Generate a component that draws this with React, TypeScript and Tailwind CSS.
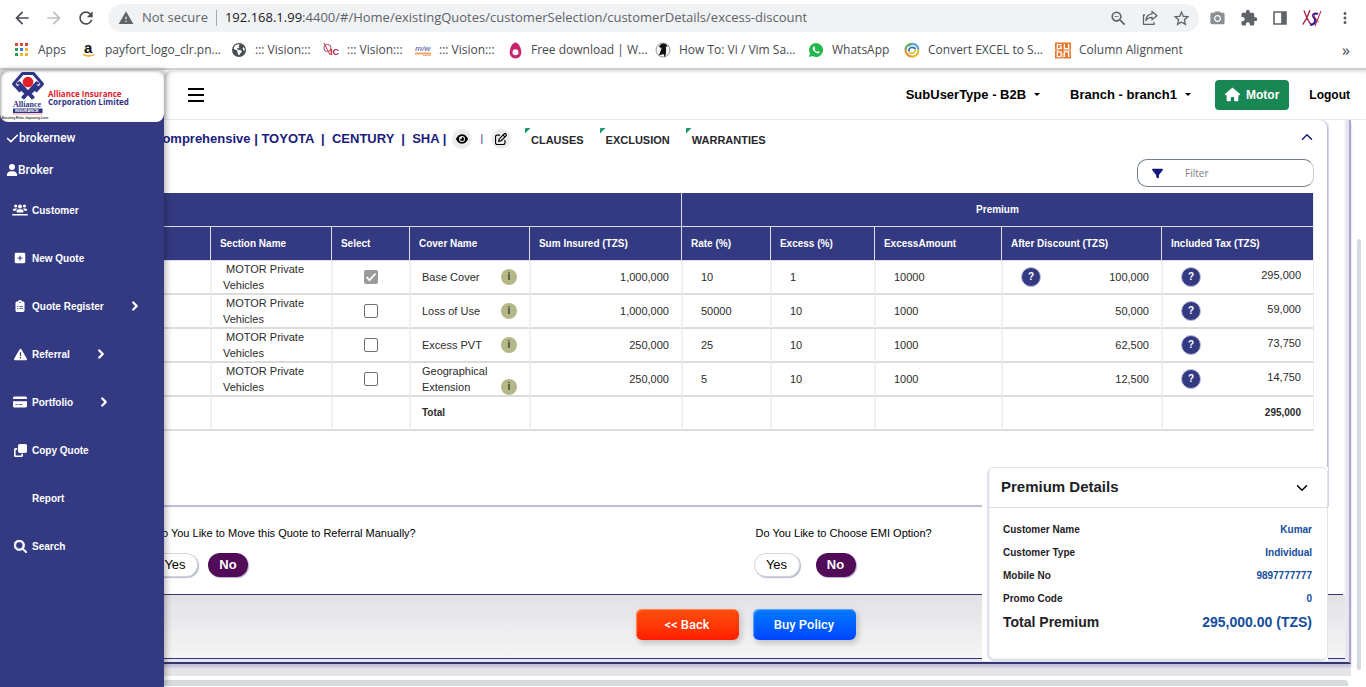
import React from 'react';
import {
  MdArrowBack,
  MdArrowForward,
  MdRefresh,
  MdWarning,
  MdOutlineZoomOut,
  MdStarBorder,
  MdPhotoCamera,
  MdExtension,
  MdMoreVert,
} from 'react-icons/md';
import {
  FaCheck,
  FaUser,
  FaUsersLine,
  FaSquarePlus,
  FaClipboardList,
  FaTriangleExclamation,
  FaCreditCard,
  FaClone,
  FaMagnifyingGlass,
  FaFilter,
  FaHouse,
  FaEye,
  FaRegPenToSquare,
  FaEarthAmericas,
} from 'react-icons/fa6';
import { ChevronDown, ChevronRight, ChevronUp } from 'lucide-react';

const UI = "font-['Liberation_Sans',Arial,sans-serif]";

function AppsIcon() {
  const colors = ['#d9483b', '#d9483b', '#d9483b', '#2a9d58', '#3b78e0', '#e8b530', '#2a9d58', '#e8b530', '#e8b530'];
  return (
    <svg width="14" height="14" viewBox="0 0 14 14">
      {colors.map((c, i) => (
        <rect key={i} x={(i % 3) * 5} y={Math.floor(i / 3) * 5} width="3" height="3" fill={c} />
      ))}
    </svg>
  );
}

function AmazonIcon() {
  return (
    <svg width="14" height="16" viewBox="0 0 14 16" className="overflow-visible">
      <text x="2" y="11" fontFamily="Liberation Sans" fontSize="15" fontWeight="700" fill="#111">a</text>
      <path d="M1 12.5 Q6.5 15.5 12.5 12.5" fill="none" stroke="#f5a623" strokeWidth="1.3" />
    </svg>
  );
}

function QicIcon() {
  return (
    <svg width="16" height="16" viewBox="0 0 16 16" className="overflow-visible">
      <circle cx="4.5" cy="6" r="3.6" fill="none" stroke="#a9475f" strokeWidth="1" />
      <path d="M1 1 L7 13" stroke="#c23a55" strokeWidth="1" />
      <text x="7" y="13" fontFamily="Liberation Sans" fontSize="9" fontWeight="700" fill="#b0203c">IC</text>
    </svg>
  );
}

function MwIcon() {
  return (
    <svg width="16" height="14" viewBox="0 0 16 14" className="overflow-visible">
      <text x="0" y="8" fontFamily="Liberation Sans" fontSize="8" fontStyle="italic" fontWeight="700" fill="#7b83b8">m/w</text>
      <path d="M0 10.5 H16" stroke="#f0a35e" strokeWidth="2" />
      <path d="M8 12.5 H16" stroke="#f4b888" strokeWidth="1" />
    </svg>
  );
}

function DropIcon() {
  return (
    <svg width="13" height="17" viewBox="0 0 13 17">
      <path d="M6.5 0.5 C9.5 0.5 12.3 6 12.3 10.3 C12.3 14 9.8 16.5 6.5 16.5 C3.2 16.5 .7 14 .7 10.3 C.7 6 3.5 .5 6.5 .5Z" fill="#c9246b" />
      <circle cx="6.5" cy="10.2" r="3" fill="#fff" />
    </svg>
  );
}

function BirdIcon() {
  return (
    <svg width="16" height="16" viewBox="0 0 16 16">
      <circle cx="8" cy="8" r="7" fill="#f4f4f4" stroke="#999" strokeWidth="1" />
      <path d="M5 3 C8 .5 12 1.500 12.500 5 L11 4.500 C10.500 7 12 9 10 15.500 L8.500 12 L4 13.500 C4.500 11 6 9 6.500 6 L4 5Z" fill="#111" />
    </svg>
  );
}

function WhatsAppIcon() {
  return (
    <svg width="16" height="16" viewBox="0 0 16 16">
      <path d="M8 1 A7 7 0 1 1 4.6 14.1 L1 15 L2 11.500 A7 7 0 0 1 8 1Z" fill="#22b84b" />
      <path d="M5.600 4.400 C4 5.400 4.600 7.600 6.400 9.600 C8.300 11.600 10.600 12.300 11.700 10.800 L11.700 10 L10 9 L9.200 9.900 C8 9.400 7 8.400 6.500 7.300 L7.200 6.400 L6.500 4.500Z" fill="#fff" />
    </svg>
  );
}

function SwirlIcon() {
  return (
    <svg width="16" height="16" viewBox="0 0 16 16" fill="none" strokeWidth="2.2" strokeLinecap="round">
      <path d="M5 3.5 C8 .5 13.500 1.800 14.300 7" stroke="#58a7dc" />
      <path d="M14.300 8.500 C14.300 12.500 10.500 15.500 6.500 14.300" stroke="#e9b52c" />
      <path d="M6 14.300 C3 13 1.500 10.500 1.600 8" stroke="#e8903a" />
      <path d="M1.600 7 C2 4.500 4 2.500 7 2" stroke="#5fae5b" />
      <path d="M4.800 8.500 C5 5.500 8.500 4.200 11 6.500" stroke="#2f6fb0" strokeWidth="1.800" />
      <path d="M11.200 8 C11 11 8 12.300 5.500 10.500" stroke="#d8c43a" strokeWidth="1.800" />
    </svg>
  );
}

function GuruIcon() {
  return (
    <svg width="17" height="17" viewBox="0 0 17 17">
      <rect width="17" height="17" fill="#e8772e" />
      <g fill="none" stroke="#fff" strokeWidth="1.4">
        <path d="M7 2.2 H2.5 V6.5 H6.5 V4.6 H5" />
        <path d="M10 1.5 V6.5 H14.5 V1.5" />
        <path d="M6.5 9.5 V15 M6.5 10 H2.5 V15 H6.5" />
        <path d="M10 15.5 V10 H14.5 V15.5" />
        <path d="M0 8.2 H4 M9 8.2 H17 M8.5 11 V17" strokeWidth="0.8" />
      </g>
    </svg>
  );
}

function ShareIcon() {
  return (
    <svg width="16" height="16" viewBox="0 0 16 16" fill="none" stroke="#5f6368" strokeWidth="1.3" strokeLinejoin="round">
      <path d="M3 5 H1.5 V14.3 H12 V12" />
      <path d="M10 1.5 L15 5.7 L10 9.8 V7.4 C7 7.3 5.3 8.4 4 10.6 C4.3 6.8 6.4 4.2 10 3.9Z" />
    </svg>
  );
}

function ProfileIcon() {
  return (
    <svg width="20" height="18" viewBox="0 0 20 18" fill="none">
      <path d="M2 1.500 C3 5 6 12 9.500 16.500 M8 1 C6.500 6 3.500 12 .800 15.500" stroke="#a3224a" strokeWidth="1.300" />
      <path d="M16 5 C12 3.500 10 6 12 8.500 C14.500 11.500 13.500 15.500 8.500 15.800" stroke="#2a1a9a" strokeWidth="2.200" />
      <path d="M19 2 L13 17 M10 5 L16.500 13" stroke="#c03055" strokeWidth="1.100" />
    </svg>
  );
}

function BrandLogo() {
  return (
    <svg width="164" height="52" viewBox="0 0 164 52" role="img" aria-label="Alliance Insurance Corporation Limited">
      <g fill="none" stroke="#2f3486" strokeWidth="3" strokeLinejoin="round">
        <path d="M20.500 21.500 L13.500 14 L22.500 3.500 H33.500 L42.500 14 L35.500 21.500" />
        <path d="M17 14 L19.500 12.500 L28 22 L36.500 12.500 L39 14" strokeWidth="2.500" />
        <path d="M18.500 15.500 L27 23.500 L22.500 28.500 M37.500 15.500 L29 23.500 L33.500 28.500" strokeWidth="4" />
      </g>
      <circle cx="28" cy="12" r="5.300" fill="#e0202b" />
      <text x="13" y="37" fontFamily="Liberation Serif" fontSize="8" fontWeight="700" fill="#2f3486">Alliance</text>
      <rect x="13" y="38.500" width="29.500" height="4.500" fill="#2f3486" />
      <text x="15" y="42.300" fontFamily="Liberation Sans" fontSize="4" fontWeight="700" fill="#fff">INSURANCE</text>
      <path d="M13 44 H42.500" stroke="#e0202b" strokeWidth="0.500" />
      <text x="2" y="49" fontFamily="Liberation Sans" fontSize="3" fontWeight="700" fill="#333">Ensuring Risks, Improving Lives</text>
      <text x="48" y="27" fontFamily="Open Sans" fontSize="8" fontWeight="700" fill="#e0202b">Alliance Insurance</text>
      <text x="48" y="35" fontFamily="Open Sans" fontSize="8" fontWeight="700" fill="#2f3486">Corporation Limited</text>
    </svg>
  );
}

const bookmarks: { icon: React.ReactNode; label: string; width: string }[] = [
  { icon: <AppsIcon />, label: 'Apps', width: 'w-[67px]' },
  { icon: <AmazonIcon />, label: 'payfort_logo_clr.pn...', width: 'w-[150px]' },
  { icon: <FaEarthAmericas size={14} color="#4a4d51" />, label: '::: Vision:::', width: 'w-[92px]' },
  { icon: <QicIcon />, label: '::: Vision:::', width: 'w-[92px]' },
  { icon: <MwIcon />, label: '::: Vision:::', width: 'w-[92px]' },
  { icon: <DropIcon />, label: 'Free download | W...', width: 'w-[148px]' },
  { icon: <BirdIcon />, label: 'How To: Vi / Vim Sa...', width: 'w-[153px]' },
  { icon: <WhatsAppIcon />, label: 'WhatsApp', width: 'w-[96px]' },
  { icon: <SwirlIcon />, label: 'Convert EXCEL to S...', width: 'w-[151px]' },
  { icon: <GuruIcon />, label: 'Column Alignment', width: 'w-[130px]' },
];

function BrowserBar() {
  return (
    <div className="border-b-2 border-[#d0d0d3] bg-white font-['Open_Sans',sans-serif] text-[#5f6368]">
      <div className="flex h-9 items-center pl-3 pr-3">
        <div className="flex w-24 items-center gap-3">
          <button aria-label="Back"><MdArrowBack size={20} color="#4a4d51" /></button>
          <button aria-label="Forward"><MdArrowForward size={20} color="#bdbfc2" /></button>
          <button aria-label="Reload"><MdRefresh size={20} color="#4a4d51" /></button>
        </div>
        <div className="flex h-7 min-w-0 flex-1 items-center rounded-full bg-[#f0f2f4] pl-2.5 pr-2">
          <MdWarning size={16} color="#5f6368" />
          <span className="ml-2 whitespace-nowrap text-[13px]">Not secure</span>
          <span className="mx-2 h-4 w-px bg-[#a5a8ac]" />
          <span className="truncate text-[13px]">
            <span className="text-[#202124]">192.168.1.99</span>
            :4400/#/Home/existingQuotes/customerSelection/customerDetails/excess-discount
          </span>
          <div className="ml-auto flex items-center gap-3.5">
            <button aria-label="Zoom"><MdOutlineZoomOut size={19} /></button>
            <button aria-label="Share"><ShareIcon /></button>
            <button aria-label="Bookmark"><MdStarBorder size={19} /></button>
          </div>
        </div>
        <div className="ml-2.5 flex items-center gap-3.5">
          <button aria-label="Capture"><MdPhotoCamera size={17} color="#8c8f92" /></button>
          <button aria-label="Extensions"><MdExtension size={18} /></button>
          <button aria-label="Side panel">
            <svg width="16" height="16" viewBox="0 0 16 16">
              <path d="M2 2 H14 V14 H2Z M10 2 V14" fill="none" stroke="#5f6368" strokeWidth="1.6" />
              <rect x="10" y="2" width="4" height="12" fill="#5f6368" />
            </svg>
          </button>
          <button aria-label="Profile"><ProfileIcon /></button>
          <button aria-label="Menu"><MdMoreVert size={18} /></button>
        </div>
      </div>
      <div className="flex h-8 items-center pb-1 pl-3.5 pr-4 text-[12px] text-[#46494d]">
        {bookmarks.map((b, i) => (
          <a key={i} href="#" className={`flex shrink-0 items-center gap-2 whitespace-nowrap ${b.width}`}>
            <span className="flex w-4 shrink-0 justify-center">{b.icon}</span>
            {b.label}
          </a>
        ))}
        <button className="ml-auto text-[16px] leading-none" aria-label="More bookmarks">»</button>
      </div>
    </div>
  );
}

const menu: { icon: React.ReactNode; label: string; more?: boolean }[] = [
  { icon: <FaUsersLine size={16} />, label: 'Customer' },
  { icon: <FaSquarePlus size={12} />, label: 'New Quote' },
  { icon: <FaClipboardList size={12} />, label: 'Quote Register', more: true },
  { icon: <FaTriangleExclamation size={13} />, label: 'Referral', more: true },
  { icon: <FaCreditCard size={14} />, label: 'Portfolio', more: true },
  { icon: <FaClone size={13} />, label: 'Copy Quote' },
  { icon: null, label: 'Report' },
  { icon: <FaMagnifyingGlass size={13} stroke="currentColor" strokeWidth={30} />, label: 'Search' },
];

function Sidebar() {
  return (
    <nav className="relative z-10 w-[164px] shrink-0 bg-[#343a82] text-white shadow-[2px_0_6px_rgba(0,0,0,0.3)]">
      <div className="bg-linear-to-b from-[#d0d0d3] from-50% to-[#343a82] to-50%">
        <div className="h-[52px] rounded-lg bg-white shadow-[inset_1px_1px_3px_rgba(0,0,0,0.35)]">
          <BrandLogo />
        </div>
      </div>
      <div className="font-['Roboto',sans-serif] text-[12px] font-medium">
        <p className="flex h-8 items-center pl-1.5"><FaCheck size={13} />brokernew</p>
        <p className="flex h-8 items-center pl-1.5"><FaUser size={12} />Broker</p>
      </div>
      <ul className="text-[10px] font-bold">
        {menu.map((m) => (
          <li key={m.label}>
            <a href="#" className="flex h-12 items-center pl-3">
              <span className="flex w-4 justify-center">{m.icon}</span>
              <span className="ml-1">{m.label}</span>
              {m.more && <ChevronRight className="ml-6" size={14} strokeWidth={4} />}
            </a>
          </li>
        ))}
      </ul>
    </nav>
  );
}

function Caret() {
  return (
    <svg width="6" height="3" viewBox="0 0 6 3"><path d="M0 0 H6 L3 3Z" fill="#000" /></svg>
  );
}

function TopBar() {
  return (
    <header className="flex h-[50px] items-center rounded-tl-lg border-b border-[#ececee] bg-white pl-6 pr-4 text-[13px] font-bold text-black shadow-[inset_2px_2px_3px_rgba(0,0,0,0.12)]">
      <button aria-label="Toggle menu">
        <svg width="16" height="14" viewBox="0 0 16 14"><path d="M0 1 H16 M0 7 H16 M0 13 H16" stroke="#000" strokeWidth="2" /></svg>
      </button>
      <div className="ml-auto flex items-center">
        <button className="flex items-center gap-2">SubUserType - B2B <Caret /></button>
        <button className="ml-[30px] flex items-center gap-2">Branch - branch1 <Caret /></button>
        <button className="ml-6 flex h-[30px] items-center gap-1.5 rounded bg-[#198754] px-2.5 text-[12px] text-white">
          <FaHouse size={15} /> Motor
        </button>
        <a href="#" className="ml-5 text-[12px]">Logout</a>
      </div>
    </header>
  );
}

function CornerTab({ children }: { children: string }) {
  return (
    <button className="flex items-start text-[11px] font-bold text-[#26282c]">
      <svg width="6" height="6" viewBox="0 0 6 6" className="shrink-0"><path d="M0 1 Q0 0 1 0 H5.500 L0 5.500Z" fill="#179a6c" /></svg>
      <span className="pt-1">{children}</span>
    </button>
  );
}

const covers = [
  { name: 'Base Cover', on: true, sum: '1,000,000', rate: '10', excess: '1', amount: '10000', after: '100,000', tax: '295,000', help: true },
  { name: 'Loss of Use', on: false, sum: '1,000,000', rate: '50000', excess: '10', amount: '1000', after: '50,000', tax: '59,000', help: false },
  { name: 'Excess PVT', on: false, sum: '250,000', rate: '25', excess: '10', amount: '1000', after: '62,500', tax: '73,750', help: false },
  { name: 'Geographical Extension', on: false, sum: '250,000', rate: '5', excess: '10', amount: '1000', after: '12,500', tax: '14,750', help: false },
];

const columns = ['', 'Section Name', 'Select', 'Cover Name', 'Sum Insured (TZS)', 'Rate (%)', 'Excess (%)', 'ExcessAmount', 'After Discount (TZS)', 'Included Tax (TZS)'];

function Help() {
  return (
    <button aria-label="Details" className="flex size-5 items-center justify-center rounded-full border border-[#b9bbd8] bg-[#343a82] text-[10px] font-bold text-white">?</button>
  );
}

const th = 'h-[34px] border-b border-l border-[#dddeea] p-0 pl-[9px] text-left font-bold';
const td = 'h-[34px] border-b-2 border-l-2 border-[#f0f0f0] border-b-[#dedbdd] p-0';

function CoverTable() {
  return (
    <table className="w-full table-fixed border-separate border-spacing-0 border-r border-[#ececec] text-[11px] leading-4 text-[#2b2b2b]">
      <colgroup>
        <col />
        <col className="w-[121px]" />
        <col className="w-[78px]" />
        <col className="w-[120px]" />
        <col className="w-[152px]" />
        <col className="w-[89px]" />
        <col className="w-[104px]" />
        <col className="w-[127px]" />
        <col className="w-[160px]" />
        <col className="w-[152px]" />
      </colgroup>
      <thead className="bg-[#343a82] text-[10px] text-white">
        <tr>
          <th colSpan={5} className={th} />
          <th colSpan={5} className="h-[34px] border-b border-l border-[#dddeea] p-0 text-center font-bold">Premium</th>
        </tr>
        <tr>
          {columns.map((c, i) => (
            <th key={i} className={th}>{c}</th>
          ))}
        </tr>
      </thead>
      <tbody>
        {covers.map((c) => (
          <tr key={c.name}>
            <td className={td} />
            <td className={td}><div className="pl-[11px] pr-4">&nbsp;MOTOR Private Vehicles</div></td>
            <td className={td}>
              <div className="flex justify-center">
                {c.on ? (
                  <span className="relative flex size-3.5 items-center justify-center rounded-xs bg-[#9b9b9b]">
                    <input type="checkbox" aria-label={`Select ${c.name}`} defaultChecked disabled className="absolute inset-0 appearance-none" />
                    <svg width="12" height="12" viewBox="0 0 12 12"><path d="M1.500 6 L4.500 9.200 L10.500 2.500" fill="none" stroke="#fff" strokeWidth="1.800" /></svg>
                  </span>
                ) : (
                  <input type="checkbox" aria-label={`Select ${c.name}`} className="size-3.5 appearance-none rounded-xs border border-[#6f6f6f] bg-white checked:bg-[#343a82]" />
                )}
              </div>
            </td>
            <td className={td}>
              <div className="flex items-end justify-between pl-[11px] pr-3">
                {c.name}
                <button aria-label={`About ${c.name}`} className="flex size-4 shrink-0 items-center justify-center rounded-full bg-[#b4b889] text-[10px] font-bold text-[#3d3f22]">i</button>
              </div>
            </td>
            <td className={td}><div className="pr-3 text-right">{c.sum}</div></td>
            <td className={td}><div className="pl-[18px]">{c.rate}</div></td>
            <td className={td}><div className="pl-[18px]">{c.excess}</div></td>
            <td className={td}><div className="pl-[18px]">{c.amount}</div></td>
            <td className={td}>
              <div className="flex items-center justify-between pl-[18px] pr-3">
                {c.help ? <Help /> : <span />}
                <span>{c.after}</span>
              </div>
            </td>
            <td className={td}>
              <div className="flex items-center justify-between pl-[18px] pr-3">
                <Help />
                <span className="pb-1">{c.tax}</span>
              </div>
            </td>
          </tr>
        ))}
        <tr className="text-[10px] font-bold">
          <td className={td} />
          <td className={td} />
          <td className={td} />
          <td className={td}><div className="pl-[11px]">Total</div></td>
          <td className={td} />
          <td className={td} />
          <td className={td} />
          <td className={td} />
          <td className={td} />
          <td className={td}><div className="pr-3 text-right">295,000</div></td>
        </tr>
      </tbody>
    </table>
  );
}

function Question({ text, gap }: { text: string; gap: string }) {
  return (
    <div className="flex flex-col gap-3">
      <p className="text-[11px] leading-4 text-black">{text}</p>
      <div className={`-ml-0.5 flex items-center text-[13px] ${gap}`}>
        <button className="h-6 w-[46px] rounded-full border border-[#d3d5e2] bg-white text-black shadow-[1px_1px_1px_#b4b8c8]">Yes</button>
        <button className="h-6 w-10 rounded-full bg-[#520b57] font-bold text-white shadow-[1px_1px_1px_#b9a8c8]">No</button>
      </div>
    </div>
  );
}

const details = [
  ['Customer Name', 'Kumar'],
  ['Customer Type', 'Individual'],
  ['Mobile No', '9897777777'],
  ['Promo Code', '0'],
];

function PremiumCard() {
  return (
    <aside className="absolute bottom-px right-[21px] w-[346px] bg-white pl-[5px]">
      <div className="rounded-md border border-[#dfe1e8] shadow-[inset_1px_-1px_2px_#d5d8e4]">
        <div className="flex h-10 items-center justify-between border-b border-[#dfe1e8] pl-[13px] pr-4">
          <h2 className="text-[15px] font-bold text-[#1e2126]">Premium Details</h2>
          <button aria-label="Collapse"><ChevronDown size={18} strokeWidth={2} /></button>
        </div>
        <dl className="h-[152px] px-[15px] pt-2.5 text-[10px] font-bold text-[#1e2126]">
          {details.map(([k, v]) => (
            <div key={k} className="flex h-[23px] items-center justify-between">
              <dt>{k}</dt>
              <dd className="text-[#134d9c]">{v}</dd>
            </div>
          ))}
          <div className="flex h-6 items-center justify-between text-[14px]">
            <dt>Total Premium</dt>
            <dd className="text-[#134d9c]">295,000.00 (TZS)</dd>
          </div>
        </dl>
      </div>
    </aside>
  );
}

function Workspace() {
  return (
    <div className="relative -ml-3 border-b-2 border-r-2 border-[#a9a7cc] border-b-[#34366f] bg-white shadow-[0_3px_2px_#c4c1da,inset_-4px_-4px_2px_#e6e4f0]">
      <section className="mr-[21px] min-h-[387px] rounded-tr-lg border-b-2 border-r border-[#bdbdd8] pr-[13px] shadow-[1px_0_1px_#d4d4e4]">
        <div className="flex h-[37px] items-center pl-px text-[13px] font-bold text-[#1c1c7c]">
          <span className="whitespace-pre">Comprehensive | TOYOTA  |  CENTURY  |  SHA |</span>
          <button aria-label="View" className="ml-1.5 flex size-5 items-center justify-center rounded-full bg-[#ececec] text-black"><FaEye size={12} /></button>
          <span className="mx-2 text-[10px] font-normal">|</span>
          <button aria-label="Edit" className="flex size-5 items-center justify-center rounded-full bg-[#ececec] text-black"><FaRegPenToSquare size={12} /></button>
          <div className="ml-3.5 flex gap-4">
            <CornerTab>CLAUSES</CornerTab>
            <CornerTab>EXCLUSION</CornerTab>
            <CornerTab>WARRANTIES</CornerTab>
          </div>
          <button aria-label="Collapse section" className="-mr-0.5 ml-auto pb-1"><ChevronUp size={18} strokeWidth={2} /></button>
        </div>
        <div className="mb-1.5 flex justify-end pt-0.5">
          <div className="flex h-7 w-[177px] items-center rounded-[10px] border border-[#74808c] border-r-[#c5cad0] pl-3.5 text-[#14147c]">
            <FaFilter size={11} />
            <input aria-label="Filter" placeholder="Filter" className="ml-[22px] w-28 font-['Open_Sans',sans-serif] text-[10px] text-black outline-none placeholder:text-[#7b7b7b]" />
          </div>
        </div>
        <CoverTable />
      </section>
      <section className="mr-1.5 grid h-[88px] grid-cols-2 gap-x-3.5 border-b border-[#34366f] pl-0.5 pt-[18px]">
        <Question text="Do You Like to Move this Quote to Referral Manually?" gap="gap-2.5" />
        <Question text="Do You Like to Choose EMI Option?" gap="gap-4" />
      </section>
      <section className="mb-[3px] mr-1 flex h-16 items-start justify-center gap-3.5 border-b border-[#34366f] bg-linear-to-b from-[#e2e2e6] to-[#f5f5f6] pr-1.5 pt-3.5 font-['Roboto',sans-serif] text-[13px] font-medium text-white">
        <button className="h-[31px] w-[103px] rounded-md bg-linear-to-b from-[#ff4d0a] to-[#ff1a00] shadow-[2px_3px_6px_rgba(0,0,0,0.2),inset_1px_1px_1px_#ff8a5a]">&lt;&lt; Back</button>
        <button className="h-[31px] w-[103px] rounded-md bg-linear-to-b from-[#0a78ff] to-[#0044ff] shadow-[2px_3px_6px_rgba(0,0,0,0.2),inset_1px_1px_1px_#5fa8ff]">Buy Policy</button>
      </section>
      <PremiumCard />
    </div>
  );
}

export default function App() {
  return (
    <div className={`flex min-h-screen flex-col overflow-hidden bg-white ${UI}`}>
      <BrowserBar />
      <div className="flex flex-1">
        <Sidebar />
        <main className="flex min-w-0 flex-1 flex-col">
          <TopBar />
          <div className="flex">
            <div className="min-w-0 flex-1 bg-[#e6e4e8] pb-3">
              <div className="bg-white"><Workspace /></div>
            </div>
            <div className="flex w-[15px] flex-col pl-1.5">
              <div className="mb-1.5 mt-[119px] w-1 flex-1 rounded-full bg-[#d5dbdf]" />
            </div>
          </div>
          <div className="mr-[18px] mt-1 h-1.5 rounded-tr bg-[#d5dbdf]" />
        </main>
      </div>
    </div>
  );
}
